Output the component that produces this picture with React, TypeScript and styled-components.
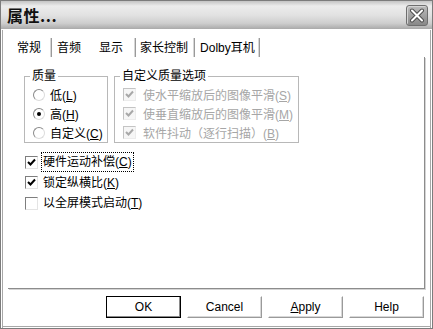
import React from 'react';
import styled, { createGlobalStyle } from 'styled-components';

const GlobalStyle = createGlobalStyle`
  html, body {
    margin: 0;
    padding: 0;
    background: #ffffff;
  }
  * {
    box-sizing: border-box;
  }
`;

const uiFont = `"Liberation Sans", "Noto Sans CJK SC", sans-serif`;

// Dialog frame
const Window = styled.div`
  width: 433px;
  height: 329px;
  border: 1px solid #7c7c7c;
  background: #ffffff;
  box-shadow: inset 1px 0 0 #ffffff, inset 2px 0 0 #a8a8a8, inset -1px 0 0 #ffffff,
    inset -2px 0 0 #a8a8a8, inset 0 -1px 0 #ffffff, inset 0 -2px 0 #a8a8a8;
  display: flex;
  flex-direction: column;
  font-family: ${uiFont};
  font-size: 12px;
  color: #000000;
  overflow: hidden;
`;

const TitleBar = styled.div`
  height: 29px;
  flex: none;
  display: flex;
  align-items: center;
  justify-content: space-between;
  padding: 0 4px 0 6px;
  background: linear-gradient(
    to bottom,
    #c4c4c4 0%,
    #ececec 18%,
    #e2e2e2 50%,
    #cdcdcd 80%,
    #a9a9a9 100%
  );
  border-bottom: 1px solid #ffffff;
`;

const Title = styled.span`
  font-family: "Noto Sans CJK SC", sans-serif;
  font-weight: 700;
  font-size: 16px;
  letter-spacing: 0.5px;
  color: #111111;
`;

const CloseButton = styled.div`
  width: 22px;
  height: 21px;
  border: 1px solid #6e6e6e;
  border-radius: 3px;
  background: linear-gradient(to bottom, #bcbcbc, #888888);
  box-shadow: inset 1px 1px 0 #d4d4d4;
  display: flex;
  align-items: center;
  justify-content: center;
`;

// Tabs
const TabStrip = styled.div`
  height: 27px;
  flex: none;
  display: flex;
  align-items: flex-end;
  padding-left: 8px;
`;

const Tab = styled.div<{ $pl: number; $pr: number; $sep: boolean }>`
  height: 19px;
  display: flex;
  align-items: center;
  padding: 0 ${(p) => p.$pr}px 2px ${(p) => p.$pl}px;
  white-space: nowrap;
  border-right: ${(p) => (p.$sep ? '1px solid #9a9a9a' : 'none')};
  box-shadow: ${(p) => (p.$sep ? 'inset -1px 0 0 #d6d6d6' : 'none')};
`;

const Panel = styled.div`
  height: 232px;
  flex: none;
  margin: 0 7px;
  border-right: 1px solid #8c8c8c;
  border-bottom: 1px solid #8c8c8c;
  box-shadow: 1px 1px 0 #d4d4d4;
  padding: 12px 0 0 16px;
  display: flex;
  flex-direction: column;
`;

const GroupRow = styled.div`
  display: flex;
  gap: 6px;
`;

const Group = styled.fieldset<{ $w: number }>`
  width: ${(p) => p.$w}px;
  margin: 0;
  padding: 2px 0 0 8px;
  border: 1px solid #b8b8b8;
  min-width: 0;
`;

const Legend = styled.legend`
  padding: 0 2px;
  margin-left: -3px;
  line-height: 14px;
  font-size: 12px;
`;

const OptionRow = styled.div<{ $h: number; $disabled?: boolean }>`
  height: ${(p) => p.$h}px;
  display: flex;
  align-items: center;
  white-space: nowrap;
  color: ${(p) => (p.$disabled ? '#a6a6a6' : '#000000')};
`;

const Radio = styled.span<{ $on?: boolean }>`
  width: 12px;
  height: 12px;
  flex: none;
  border-radius: 50%;
  border: 1px solid;
  border-color: #8a8a8a #dcdcdc #dcdcdc #8a8a8a;
  background: #ffffff;
  margin-right: 5px;
  display: flex;
  align-items: center;
  justify-content: center;

  &::after {
    content: '';
    width: 4px;
    height: 4px;
    border-radius: 50%;
    background: ${(p) => (p.$on ? '#000000' : 'transparent')};
  }
`;

const Box = styled.span<{ $disabled?: boolean; $gap: number }>`
  width: 13px;
  height: 13px;
  flex: none;
  border: 1px solid;
  border-color: ${(p) =>
    p.$disabled ? '#c4c4c4 #ececec #ececec #c4c4c4' : '#7e7e7e #e4e4e4 #e4e4e4 #7e7e7e'};
  background: ${(p) => (p.$disabled ? '#f6f6f6' : '#ffffff')};
  margin-right: ${(p) => p.$gap}px;
  display: flex;
  align-items: center;
  justify-content: center;
`;

const Label = styled.span<{ $focus?: boolean }>`
  padding: 1px 1px;
  outline: ${(p) => (p.$focus ? '1px dotted #000000' : 'none')};
  line-height: 16px;
`;

const Key = styled.span`
  text-decoration: underline;
  text-underline-offset: 1px;
`;

const CheckList = styled.div`
  margin-top: 9px;
  margin-left: 1px;
  display: flex;
  flex-direction: column;
`;

// Buttons
const ButtonRow = styled.div`
  margin-top: 7px;
  padding-right: 8px;
  display: flex;
  justify-content: flex-end;
  gap: 6px;
`;

const Button = styled.div<{ $default?: boolean }>`
  width: 75px;
  height: 22px;
  display: flex;
  align-items: center;
  justify-content: center;
  font-family: ${uiFont};
  font-size: 12px;
  background: #ffffff;
  border: 1px solid;
  border-color: ${(p) =>
    p.$default ? '#000000' : '#ffffff #9a9a9a #9a9a9a #ffffff'};
  box-shadow: ${(p) =>
    p.$default ? 'inset -1px -1px 0 #8a8a8a' : 'inset -1px -1px 0 #d8d8d8'};
`;

const Check: React.FC<{ color: string }> = ({ color }) => (
  <svg width="9" height="9" viewBox="0 0 9 9">
    <polyline points="1,4 3.5,6.5 8,1.5" fill="none" stroke={color} strokeWidth="2" />
  </svg>
);

const CloseIcon = () => (
  <svg width="16" height="15" viewBox="0 0 16 15">
    <path d="M3 2.5 L13 12.5 M13 2.5 L3 12.5" stroke="#505050" strokeWidth="4" strokeLinecap="round" />
    <path d="M3 2.5 L13 12.5 M13 2.5 L3 12.5" stroke="#ffffff" strokeWidth="2" strokeLinecap="round" />
  </svg>
);

const tabs = [
  { label: '常规', pl: 8, pr: 10, sep: true },
  { label: '音频', pl: 5, pr: 9, sep: false },
  { label: '显示', pl: 9, pr: 12, sep: true },
  { label: '家长控制', pl: 4, pr: 6, sep: true },
  { label: 'Dolby耳机', pl: 5, pr: 4, sep: true },
];

const App: React.FC = () => (
  <>
    <GlobalStyle />
    <Window>
      <TitleBar>
        <Title>属性...</Title>
        <CloseButton>
          <CloseIcon />
        </CloseButton>
      </TitleBar>

      <TabStrip>
        {tabs.map((t) => (
          <Tab key={t.label} $pl={t.pl} $pr={t.pr} $sep={t.sep}>
            {t.label}
          </Tab>
        ))}
      </TabStrip>

      <Panel>
        <GroupRow>
          <Group $w={84}>
            <Legend>质量</Legend>
            <OptionRow $h={19}>
              <Radio />
              <span>
                低(<Key>L</Key>)
              </span>
            </OptionRow>
            <OptionRow $h={19}>
              <Radio $on />
              <span>
                高(<Key>H</Key>)
              </span>
            </OptionRow>
            <OptionRow $h={19}>
              <Radio />
              <span>
                自定义(<Key>C</Key>)
              </span>
            </OptionRow>
          </Group>

          <Group $w={185}>
            <Legend>自定义质量选项</Legend>
            <OptionRow $h={19} $disabled>
              <Box $disabled $gap={7}>
                <Check color="#a8a8a8" />
              </Box>
              <span>
                使水平缩放后的图像平滑(<Key>S</Key>)
              </span>
            </OptionRow>
            <OptionRow $h={19} $disabled>
              <Box $disabled $gap={7}>
                <Check color="#a8a8a8" />
              </Box>
              <span>
                使垂直缩放后的图像平滑(<Key>M</Key>)
              </span>
            </OptionRow>
            <OptionRow $h={19} $disabled>
              <Box $disabled $gap={7}>
                <Check color="#a8a8a8" />
              </Box>
              <span>
                软件抖动（逐行扫描）(<Key>B</Key>)
              </span>
            </OptionRow>
          </Group>
        </GroupRow>

        <CheckList>
          <OptionRow $h={20}>
            <Box $gap={4}>
              <Check color="#000000" />
            </Box>
            <Label $focus>
              硬件运动补偿(<Key>C</Key>)
            </Label>
          </OptionRow>
          <OptionRow $h={21}>
            <Box $gap={4}>
              <Check color="#000000" />
            </Box>
            <Label>
              锁定纵横比(<Key>K</Key>)
            </Label>
          </OptionRow>
          <OptionRow $h={20}>
            <Box $gap={4} />
            <Label>
              以全屏模式启动(<Key>T</Key>)
            </Label>
          </OptionRow>
        </CheckList>
      </Panel>

      <ButtonRow>
        <Button $default>OK</Button>
        <Button>Cancel</Button>
        <Button>
          <span>
            <Key>A</Key>pply
          </span>
        </Button>
        <Button>Help</Button>
      </ButtonRow>
    </Window>
  </>
);

export default App;
